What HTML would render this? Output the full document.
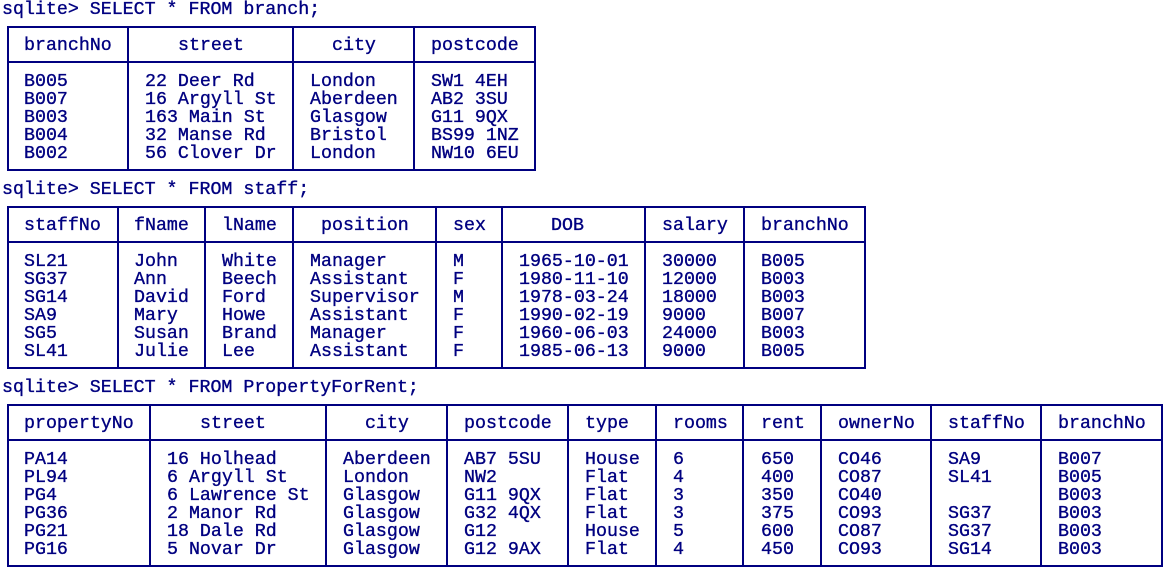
<!DOCTYPE html>
<html><head><meta charset="utf-8"><style>
body{margin:0;width:1167px;height:575px;background:#fff;position:relative;overflow:hidden;font-family:"Liberation Mono",monospace;font-size:18.3px;color:#000080}
.t{position:absolute;white-space:pre;line-height:18px;margin-top:2px;-webkit-text-stroke:0.35px #000080}
.b{position:absolute;border:2px solid #000080;box-sizing:border-box}
.v{position:absolute;width:2px;background:#000080}
.h{position:absolute;height:2px;background:#000080}
</style></head><body>
<div class="t" style="left:2px;top:-1px">sqlite&gt; SELECT * FROM branch;</div>
<div class="b" style="left:7px;top:26px;width:529px;height:145px"></div>
<div class="h" style="left:7px;top:61px;width:529px"></div>
<div class="v" style="left:127px;top:26px;height:145px"></div>
<div class="v" style="left:292px;top:26px;height:145px"></div>
<div class="v" style="left:413px;top:26px;height:145px"></div>
<div class="t" style="left:24px;top:35px">branchNo</div>
<div class="t" style="left:178px;top:35px">street</div>
<div class="t" style="left:332px;top:35px">city</div>
<div class="t" style="left:431px;top:35px">postcode</div>
<div class="t" style="left:24px;top:71px">B005
B007
B003
B004
B002</div>
<div class="t" style="left:145px;top:71px">22 Deer Rd
16 Argyll St
163 Main St
32 Manse Rd
56 Clover Dr</div>
<div class="t" style="left:310px;top:71px">London
Aberdeen
Glasgow
Bristol
London</div>
<div class="t" style="left:431px;top:71px">SW1 4EH
AB2 3SU
G11 9QX
BS99 1NZ
NW10 6EU</div>

<div class="t" style="left:2px;top:179px">sqlite&gt; SELECT * FROM staff;</div>
<div class="b" style="left:7px;top:206px;width:859px;height:163px"></div>
<div class="h" style="left:7px;top:241px;width:859px"></div>
<div class="v" style="left:117px;top:206px;height:163px"></div>
<div class="v" style="left:204px;top:206px;height:163px"></div>
<div class="v" style="left:292px;top:206px;height:163px"></div>
<div class="v" style="left:435px;top:206px;height:163px"></div>
<div class="v" style="left:501px;top:206px;height:163px"></div>
<div class="v" style="left:644px;top:206px;height:163px"></div>
<div class="v" style="left:743px;top:206px;height:163px"></div>
<div class="t" style="left:24px;top:215px">staffNo</div>
<div class="t" style="left:134px;top:215px">fName</div>
<div class="t" style="left:222px;top:215px">lName</div>
<div class="t" style="left:321px;top:215px">position</div>
<div class="t" style="left:453px;top:215px">sex</div>
<div class="t" style="left:551px;top:215px">DOB</div>
<div class="t" style="left:662px;top:215px">salary</div>
<div class="t" style="left:761px;top:215px">branchNo</div>
<div class="t" style="left:24px;top:251px">SL21
SG37
SG14
SA9
SG5
SL41</div>
<div class="t" style="left:134px;top:251px">John
Ann
David
Mary
Susan
Julie</div>
<div class="t" style="left:222px;top:251px">White
Beech
Ford
Howe
Brand
Lee</div>
<div class="t" style="left:310px;top:251px">Manager
Assistant
Supervisor
Assistant
Manager
Assistant</div>
<div class="t" style="left:453px;top:251px">M
F
M
F
F
F</div>
<div class="t" style="left:519px;top:251px">1965-10-01
1980-11-10
1978-03-24
1990-02-19
1960-06-03
1985-06-13</div>
<div class="t" style="left:662px;top:251px">30000
12000
18000
9000
24000
9000</div>
<div class="t" style="left:761px;top:251px">B005
B003
B003
B007
B003
B005</div>

<div class="t" style="left:2px;top:377px">sqlite&gt; SELECT * FROM PropertyForRent;</div>
<div class="b" style="left:7px;top:404px;width:1156px;height:163px"></div>
<div class="h" style="left:7px;top:439px;width:1156px"></div>
<div class="v" style="left:149px;top:404px;height:163px"></div>
<div class="v" style="left:325px;top:404px;height:163px"></div>
<div class="v" style="left:446px;top:404px;height:163px"></div>
<div class="v" style="left:567px;top:404px;height:163px"></div>
<div class="v" style="left:655px;top:404px;height:163px"></div>
<div class="v" style="left:742px;top:404px;height:163px"></div>
<div class="v" style="left:820px;top:404px;height:163px"></div>
<div class="v" style="left:930px;top:404px;height:163px"></div>
<div class="v" style="left:1040px;top:404px;height:163px"></div>
<div class="t" style="left:24px;top:413px">propertyNo</div>
<div class="t" style="left:200px;top:413px">street</div>
<div class="t" style="left:365px;top:413px">city</div>
<div class="t" style="left:464px;top:413px">postcode</div>
<div class="t" style="left:585px;top:413px">type</div>
<div class="t" style="left:673px;top:413px">rooms</div>
<div class="t" style="left:761px;top:413px">rent</div>
<div class="t" style="left:838px;top:413px">ownerNo</div>
<div class="t" style="left:948px;top:413px">staffNo</div>
<div class="t" style="left:1058px;top:413px">branchNo</div>
<div class="t" style="left:24px;top:449px">PA14
PL94
PG4
PG36
PG21
PG16</div>
<div class="t" style="left:167px;top:449px">16 Holhead
6 Argyll St
6 Lawrence St
2 Manor Rd
18 Dale Rd
5 Novar Dr</div>
<div class="t" style="left:343px;top:449px">Aberdeen
London
Glasgow
Glasgow
Glasgow
Glasgow</div>
<div class="t" style="left:464px;top:449px">AB7 5SU
NW2
G11 9QX
G32 4QX
G12
G12 9AX</div>
<div class="t" style="left:585px;top:449px">House
Flat
Flat
Flat
House
Flat</div>
<div class="t" style="left:673px;top:449px">6
4
3
3
5
4</div>
<div class="t" style="left:761px;top:449px">650
400
350
375
600
450</div>
<div class="t" style="left:838px;top:449px">CO46
CO87
CO40
CO93
CO87
CO93</div>
<div class="t" style="left:948px;top:449px">SA9
SL41

SG37
SG37
SG14</div>
<div class="t" style="left:1058px;top:449px">B007
B005
B003
B003
B003
B003</div>
</body></html>
